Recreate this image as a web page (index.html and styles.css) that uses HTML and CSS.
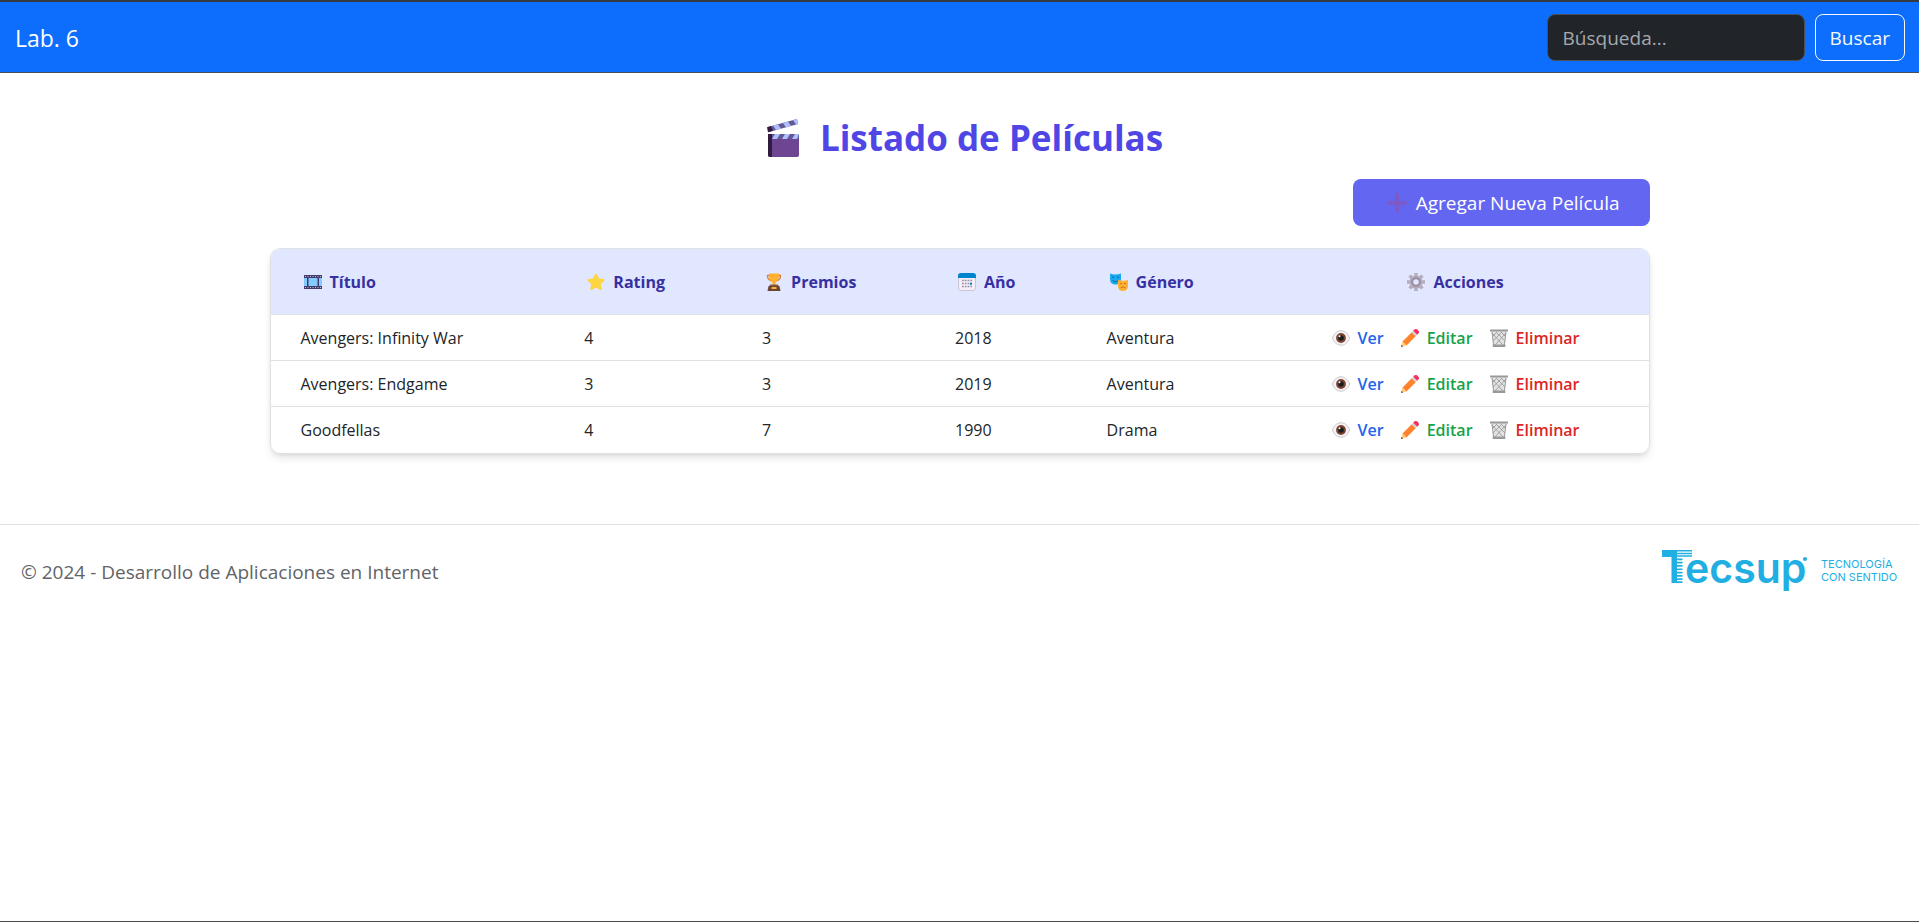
FILE: index.html
```html
<!DOCTYPE html>
<html lang="es">
<head>
<meta charset="utf-8">
<meta name="viewport" content="width=device-width, initial-scale=1">
<title>Listado de Películas</title>
<link rel="stylesheet" href="styles.css">
</head>
<body>
<svg class="sprite" aria-hidden="true">
  <symbol id="clapper" viewBox="0 0 32 38">
    <path d="M1 8 30 0l1 5L2 13z" fill="#635994"/>
    <path d="M6 6.600l5-1.400 3 4.500-5 1.400zM16 3.900l5-1.400 3 4.500-5 1.400zM26 1.100l4-1.100 1 5-2 .5z" fill="#aebeff"/>
    <path d="M0 8.300 4 7l2 4.800-5 1.400z" fill="#321b41"/>
    <path d="M1 15h31v21a2 2 0 0 1-2 2H3a2 2 0 0 1-2-2z" fill="#6d4590"/>
    <path d="M5 15h27v5H5z" fill="#635994"/>
    <path d="M8 15h5l-3 5H5zM18 15h5l-3 5h-5zM28 15h4l-2 5h-5z" fill="#aebeff"/>
    <path d="M1 15h4v23H3a2 2 0 0 1-2-2z" fill="#321b41"/>
  </symbol>
  <symbol id="plus" viewBox="0 0 20 20">
    <path d="M10 2v16M2 10h16" stroke="#7d5ac8" stroke-width="4" stroke-linecap="round"/>
  </symbol>
  <symbol id="film" viewBox="0 0 18 18">
    <path d="M0 2h18v14H0z" fill="#433b6b"/>
    <path d="M0 5h3v8H0zM4.500 5h9v8h-9zM15 5h3v8h-3z" fill="#83cbff"/>
    <path d="M1 3.500h16M1 14.500h16" stroke="#c5bfe0" stroke-width="1" stroke-dasharray="1 1.500"/>
  </symbol>
  <symbol id="star" viewBox="0 0 18 18">
    <path d="m9 2 2.200 4.500 5 .7-3.600 3.500.9 5L9 13.300l-4.500 2.400.9-5L1.800 7.200l5-.7z" fill="#fcd53f" stroke="#fcd53f" stroke-width="2.400" stroke-linejoin="round"/>
  </symbol>
  <symbol id="trophy" viewBox="0 0 18 18">
    <path d="M5 2.500H2.500c0 3 1.200 4.500 3.500 5M13 2.500h2.500c0 3-1.200 4.500-3.500 5" fill="none" stroke="#d9822b" stroke-width="1.300"/>
    <path d="M4 .5h10c0 5-1 8-3.500 9V12h-3V9.500C5 8.500 4 5.500 4 .5z" fill="#ffb02e"/>
    <path d="M5 11.500h8l1 2.500H4z" fill="#8b5a45"/>
    <path d="M3.500 13h11l1 5h-13z" fill="#6d4534"/>
    <path d="M6.500 14h5v2h-5z" fill="#ffb02e"/>
  </symbol>
  <symbol id="calendar" viewBox="0 0 18 18">
    <rect x=".5" y=".5" width="17" height="17" rx="2.500" fill="#f3eef8" stroke="#cdc4d6"/>
    <path d="M0 5V3a3 3 0 0 1 3-3h12a3 3 0 0 1 3 3v2z" fill="#0084ce"/>
    <path d="M4 7.500h10M4 10.500h10M4 13.500h10" stroke="#998ea4" stroke-width="1.700" stroke-dasharray="1.700 1.100"/>
    <path d="M12 9.700h2v2h-2z" fill="#0084ce"/>
  </symbol>
  <symbol id="masks" viewBox="0 0 18 18">
    <path d="M0 .5q5.500 2 11 0v6c0 3-2.300 5-5.500 5S0 9.500 0 6.500z" fill="#1ba8ee"/>
    <path d="M2 4.500q1-1 2 0M7 4.500q1-1 2 0M2.500 7.500q3 2.800 6 0" fill="none" stroke="#0a5c9a" stroke-width=".9"/>
    <path d="M8 7q5 1.500 10 0v6c0 3-2 5-5 5s-5-2-5-5z" fill="#ffb02e"/>
    <path d="M10 10.500q1 .8 2 0M14 10.500q1 .8 2 0M10.500 15q2.500-2.500 5 0" fill="none" stroke="#b56a1e" stroke-width=".9"/>
  </symbol>
  <symbol id="gear" viewBox="0 0 18 18">
    <path d="M9 0v18M0 9h18M2.600 2.600l12.800 12.800M15.400 2.600 2.600 15.400" stroke="#b4acbc" stroke-width="3.400"/>
    <circle cx="9" cy="9" r="6.600" fill="#b4acbc"/>
    <circle cx="9" cy="9" r="3.800" fill="#e0e7ff" stroke="#998ea4" stroke-width="2"/>
  </symbol>
  <symbol id="eye" viewBox="0 0 18 18">
    <path d="M.4 9C2.500 3.500 6 1.800 9 1.800s6.500 1.700 8.600 7.200C15.500 14.500 12 16.200 9 16.200S2.500 14.500.4 9z" fill="#f5f3f5" stroke="#bdb9bd" stroke-width=".8"/>
    <circle cx="9" cy="9" r="4.900" fill="#7d4533"/>
    <circle cx="9" cy="9" r="2.800" fill="#1c1c1c"/>
    <circle cx="7.500" cy="7.300" r="1" fill="#fff"/>
  </symbol>
  <symbol id="pencil" viewBox="0 0 18 18">
    <path d="m0 18 1.500-5.500 4 4z" fill="#ffce7c"/>
    <path d="m0 18 .6-2.200 1.600 1.600z" fill="#555"/>
    <path d="M1.500 12.500 10.700 3.300l4 4L5.500 16.500z" fill="#ff822d"/>
    <path d="m10.700 3.300 1.500-1.500 4 4-1.500 1.500z" fill="#d3d3d3"/>
    <path d="m12.200 1.800 1.200-1.200a2 2 0 0 1 2.800 0l1.200 1.200a2 2 0 0 1 0 2.800l-1.200 1.200z" fill="#f92f60"/>
  </symbol>
  <symbol id="trash" viewBox="0 0 18 18">
    <path d="M1.500 2h15l-1.800 15H3.300z" fill="#e2e2e2"/>
    <path d="m2 4 11 12M6 3l9 9M11 3l5 5M16 4 5 16M12 3 3 12M7 3 2 8" stroke="#9b9b9b" stroke-width=".9"/>
    <path d="M2 3l1.600 13M16 3l-1.600 13" stroke="#9b9b9b" stroke-width="1"/>
    <path d="M0 .5h18v2H0zM2.700 15.500h12.600V18H2.700z" fill="#999"/>
  </symbol>
</svg>

<header class="navbar">
  <a class="brand" href="#">Lab. 6</a>
  <form class="search" role="search">
    <input class="search-input" type="search" placeholder="Búsqueda..." aria-label="Búsqueda">
    <button class="search-button" type="submit">Buscar</button>
  </form>
</header>

<main class="content">
  <h1 class="title"><svg class="title-icon" aria-hidden="true"><use href="#clapper"/></svg>Listado de Películas</h1>
  <div class="toolbar">
    <a class="add-button" href="#"><svg class="add-icon" aria-hidden="true"><use href="#plus"/></svg>Agregar Nueva Película</a>
  </div>
  <div class="card">
    <table class="movies">
      <colgroup>
        <col class="col-title"><col class="col-rating"><col class="col-awards"><col class="col-year"><col class="col-genre"><col class="col-actions">
      </colgroup>
      <thead>
        <tr>
          <th scope="col"><span class="label"><svg class="icon" aria-hidden="true"><use href="#film"/></svg>Título</span></th>
          <th scope="col"><span class="label"><svg class="icon" aria-hidden="true"><use href="#star"/></svg>Rating</span></th>
          <th scope="col"><span class="label"><svg class="icon" aria-hidden="true"><use href="#trophy"/></svg>Premios</span></th>
          <th scope="col"><span class="label"><svg class="icon" aria-hidden="true"><use href="#calendar"/></svg>Año</span></th>
          <th scope="col"><span class="label"><svg class="icon" aria-hidden="true"><use href="#masks"/></svg>Género</span></th>
          <th scope="col"><span class="label centered"><svg class="icon" aria-hidden="true"><use href="#gear"/></svg>Acciones</span></th>
        </tr>
      </thead>
      <tbody>
        <tr>
          <td>Avengers: Infinity War</td><td>4</td><td>3</td><td>2018</td><td>Aventura</td>
          <td><div class="actions">
            <a class="action view" href="#"><svg class="icon" aria-hidden="true"><use href="#eye"/></svg>Ver</a>
            <a class="action edit" href="#"><svg class="icon" aria-hidden="true"><use href="#pencil"/></svg>Editar</a>
            <a class="action delete" href="#"><svg class="icon" aria-hidden="true"><use href="#trash"/></svg>Eliminar</a>
          </div></td>
        </tr>
        <tr>
          <td>Avengers: Endgame</td><td>3</td><td>3</td><td>2019</td><td>Aventura</td>
          <td><div class="actions">
            <a class="action view" href="#"><svg class="icon" aria-hidden="true"><use href="#eye"/></svg>Ver</a>
            <a class="action edit" href="#"><svg class="icon" aria-hidden="true"><use href="#pencil"/></svg>Editar</a>
            <a class="action delete" href="#"><svg class="icon" aria-hidden="true"><use href="#trash"/></svg>Eliminar</a>
          </div></td>
        </tr>
        <tr>
          <td>Goodfellas</td><td>4</td><td>7</td><td>1990</td><td>Drama</td>
          <td><div class="actions">
            <a class="action view" href="#"><svg class="icon" aria-hidden="true"><use href="#eye"/></svg>Ver</a>
            <a class="action edit" href="#"><svg class="icon" aria-hidden="true"><use href="#pencil"/></svg>Editar</a>
            <a class="action delete" href="#"><svg class="icon" aria-hidden="true"><use href="#trash"/></svg>Eliminar</a>
          </div></td>
        </tr>
      </tbody>
    </table>
  </div>
</main>

<footer class="footer">
  <p class="copyright">© 2024 - Desarrollo de Aplicaciones en Internet</p>
  <svg class="logo" viewBox="0 0 236 44" role="img" aria-label="Tecsup, Tecnología con sentido">
    <path d="M0 0h15v33H9.500V7H0z"/>
    <path d="M15 0h15v1.500H15zM15 2.700h15v1.500H15zM15 5.300h15v1.500H15zM15 8.500h5.500v1.700H15zM15 11.800h5.500v1.700H15zM15 15.100h5.500v1.700H15zM15 18.400h5.500v1.700H15zM15 21.700h5.500v1.700H15zM15 25h5.500v1.700H15zM15 28.200h5.500v1.700H15zM15 31.300h5.500V33H15z"/>
    <text class="logo-name" x="23" y="33">ecsup</text>
    <circle cx="143" cy="9" r="2"/>
    <text class="logo-tag" x="159" y="18">TECNOLOGÍA</text>
    <text class="logo-tag" x="159" y="31">CON SENTIDO</text>
  </svg>
</footer>
</body>
</html>
```

FILE: styles.css
```css
* {
  box-sizing: border-box;
}

body {
  margin: 0;
  min-height: 100vh;
  border-bottom: 1px solid #4a4a4d;
  background: #fff;
  color: #212529;
  font-family: "Open Sans", "Noto Sans", sans-serif;
  font-size: 16px;
  line-height: 24px;
}

a {
  text-decoration: none;
}

.sprite {
  position: absolute;
  width: 0;
  height: 0;
}

.navbar {
  display: flex;
  align-items: center;
  justify-content: space-between;
  padding: 12px 14px 11px 15px;
  border-top: 2px solid #343a40;
  border-bottom: 1px solid #495057;
  background: #0d6efd;
}

.brand {
  color: #fff;
  font-size: 23px;
  line-height: 36px;
}

.search {
  display: flex;
  gap: 10px;
}

.search-input,
.search-button {
  height: 47px;
  border-radius: 8px;
  font-family: inherit;
  font-size: 19px;
}

.search-input {
  width: 258px;
  padding: 0 15px;
  border: 1px solid #495057;
  background: #212529;
  color: #dee2e6;
}

.search-input::placeholder {
  color: #a5a9ad;
  opacity: 1;
}

.search-button {
  padding: 0 14px;
  border: 1px solid #f8f9fa;
  background: transparent;
  color: #f8f9fa;
}

.content {
  max-width: 1380px;
  margin: 0 auto;
  padding: 40px 0 70px;
}

.title {
  display: flex;
  align-items: center;
  justify-content: center;
  gap: 20px;
  margin: 0 0 16px;
  padding-left: 10px;
  color: #4f46e5;
  font-size: 35px;
  font-weight: 700;
  line-height: 50px;
}

.title-icon {
  width: 34px;
  height: 38px;
}

.toolbar {
  display: flex;
  justify-content: flex-end;
  margin-bottom: 22px;
}

.add-button {
  display: flex;
  align-items: center;
  gap: 9px;
  height: 47px;
  padding: 0 30px 0 34px;
  border-radius: 8px;
  background: #6366f1;
  color: #fff;
  font-size: 19px;
}

.add-icon {
  width: 20px;
  height: 20px;
}

.card {
  overflow: hidden;
  border: 1px solid #dee2e6;
  border-radius: 10px;
  box-shadow: 0 5px 8px -1px rgba(0, 0, 0, 0.1), 0 2px 5px -2px rgba(0, 0, 0, 0.1);
}

.movies {
  width: 100%;
  border-collapse: collapse;
  table-layout: fixed;
}

.col-title { width: 20.6%; }
.col-rating { width: 12.9%; }
.col-awards { width: 14%; }
.col-year { width: 11%; }
.col-genre { width: 13.5%; }
.col-actions { width: 28%; }

.movies th,
.movies td {
  padding: 0 30px;
  text-align: left;
}

.movies th {
  padding: 21px 30px 20px;
  background: #e0e7ff;
  color: #3730a3;
  font-weight: 700;
}

.movies td {
  height: 46px;
  border-top: 1px solid #dee2e6;
}

.label {
  display: flex;
  align-items: center;
  gap: 8px;
  padding-left: 3px;
}

.centered {
  justify-content: center;
  padding-left: 0;
}

.icon {
  width: 18px;
  height: 18px;
}

.actions {
  display: flex;
  justify-content: center;
  gap: 17px;
}

.action {
  display: flex;
  align-items: center;
  gap: 8px;
  font-weight: 600;
}

.view { color: #2563eb; }
.edit { color: #16a34a; }
.delete { color: #dc2626; }

.footer {
  display: flex;
  align-items: center;
  justify-content: space-between;
  padding: 25px 21px;
  border-top: 1px solid #dee2e6;
}

.copyright {
  margin: 0;
  color: #5f6468;
  font-size: 19px;
}

.logo {
  width: 236px;
  height: 44px;
  fill: #20aee3;
}

.logo-name {
  font-family: Inter, sans-serif;
  font-size: 41px;
  font-weight: 600;
}

.logo-tag {
  font-family: Inter, sans-serif;
  font-size: 11px;
}
```
